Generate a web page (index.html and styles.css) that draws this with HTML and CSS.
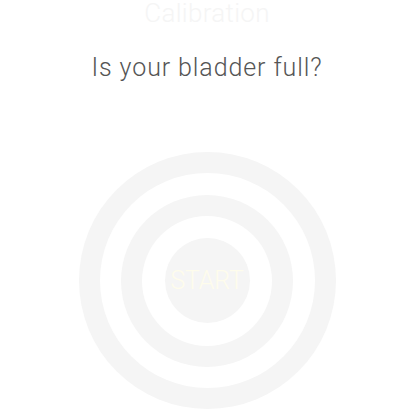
FILE: index.html
```html
<!DOCTYPE html>
<html>
<head>
<meta charset="utf-8">
<link rel="stylesheet" href="styles.css">
</head>
<body>
<div class="page">
  <h1 class="title">Calibration</h1>
  <p class="question">Is your bladder full?</p>
  <div class="target">
    <div class="ring outer">
      <div class="gap g1">
        <div class="ring mid">
          <div class="gap g2">
            <div class="core"><span class="start">START</span></div>
          </div>
        </div>
      </div>
    </div>
  </div>
</div>
</body>
</html>
```
FILE: styles.css
```css
html, body {
  margin: 0;
  padding: 0;
  background: #ffffff;
}
.page {
  width: 414px;
  height: 420px;
  display: flex;
  flex-direction: column;
  align-items: center;
  font-family: Roboto, "Liberation Sans", Arial, sans-serif;
  font-weight: 300;
  overflow: hidden;
}
.title {
  margin: 0;
  font-size: 26px;
  line-height: 26px;
  font-weight: 300;
  color: #f5f5f5;
  letter-spacing: 0.3px;
}
.question {
  margin: 29px 0 0 0;
  font-size: 25px;
  line-height: 25px;
  letter-spacing: 0.9px;
  color: #555555;
}
.target {
  margin-top: 72px;
}
.ring, .gap, .core {
  border-radius: 50%;
  display: flex;
  align-items: center;
  justify-content: center;
}
.ring { background: #f5f5f5; }
.gap { background: #ffffff; }
.outer { width: 257px; height: 257px; }
.g1 { width: 215px; height: 215px; }
.mid { width: 172px; height: 172px; }
.g2 { width: 130px; height: 130px; }
.core { width: 85px; height: 85px; background: #f5f5f5; }
.start {
  font-size: 25px;
  line-height: 25px;
  color: #fefcec;
  letter-spacing: -0.2px;
}
```
